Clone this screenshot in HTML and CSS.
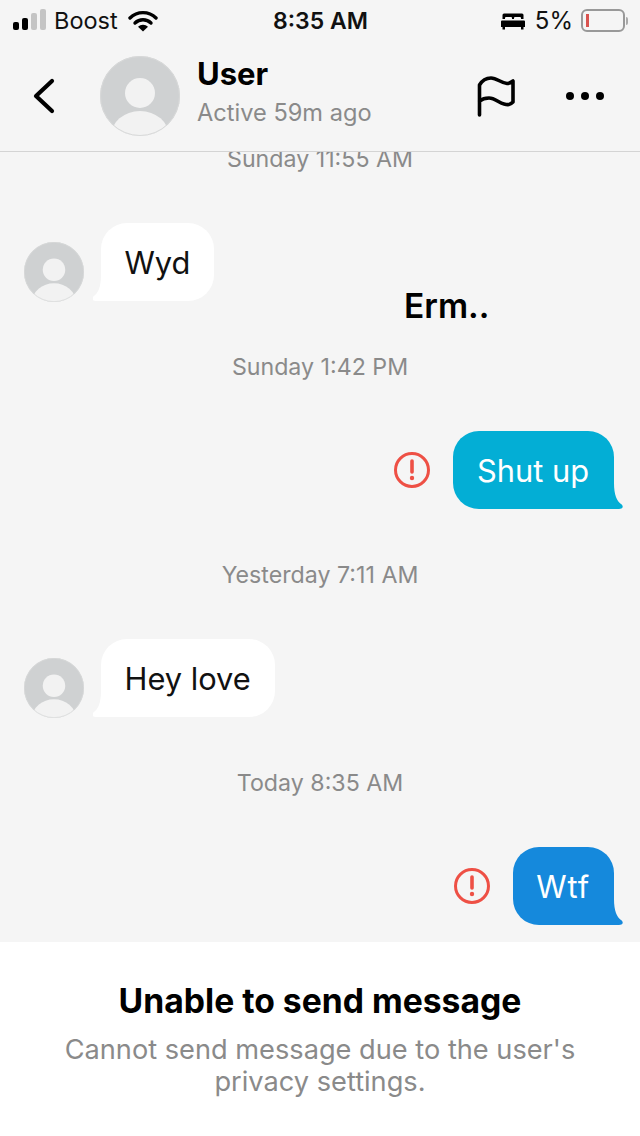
FILE: index.html
```html
<!DOCTYPE html>
<html lang="en">
<head>
    <meta charset="UTF-8">
    <meta name="viewport" content="width=device-width, initial-scale=1.0">
    <title>Messages</title>
    <link rel="stylesheet" href="styles.css">
</head>
<body>
    <svg class="defs" width="0" height="0">
        <symbol id="avatar" viewBox="0 0 80 80">
            <clipPath id="avatar-clip"><circle cx="40" cy="40" r="40"/></clipPath>
            <g clip-path="url(#avatar-clip)">
                <rect width="80" height="80" fill="#cfd1d2"/>
                <circle cx="40" cy="37" r="15" fill="#f2f2f2"/>
                <ellipse cx="40" cy="80" rx="29" ry="25" fill="#f2f2f2"/>
            </g>
            <circle cx="40" cy="40" r="39.500" fill="none" stroke="#d8d9d9"/>
        </symbol>
        <symbol id="alert" viewBox="0 0 36 36">
            <circle cx="18" cy="18" r="16.500" fill="none" stroke="#ee5045" stroke-width="3"/>
            <path d="M18 9v11" stroke="#ee5045" stroke-width="3.600" stroke-linecap="round"/>
            <circle cx="18" cy="26" r="2.200" fill="#ee5045"/>
        </symbol>
    </svg>

    <div class="screen">
        <!-- Status bar -->
        <div class="status">
            <div class="status-left">
                <svg class="signal" width="33" height="22" viewBox="0 0 33 22">
                    <rect x="0" y="13" width="6" height="8" rx="2" fill="#000"/>
                    <rect x="9" y="9" width="6" height="12" rx="2" fill="#000"/>
                    <rect x="18" y="4" width="6" height="17" rx="2" fill="#c4c4c4"/>
                    <rect x="27" y="0" width="6" height="21" rx="2" fill="#c4c4c4"/>
                </svg>
                <span>Boost</span>
                <svg class="wifi" width="30" height="22" viewBox="0 0 30 22">
                    <path d="M2 8a18.500 18.500 0 0 1 26 0" fill="none" stroke="#000" stroke-width="3.400" stroke-linecap="round"/>
                    <path d="M7 13a11.500 11.500 0 0 1 16 0" fill="none" stroke="#000" stroke-width="3.400" stroke-linecap="round"/>
                    <path d="M15 21.500l-5-4.800a7.200 7.200 0 0 1 10 0z" fill="#000"/>
                </svg>
            </div>
            <div class="status-time">8:35 AM</div>
            <div class="status-right">
                <svg width="24" height="18" viewBox="0 0 24 18">
                    <path d="M3 1.500h18a1.500 1.500 0 0 1 1.500 1.500v4H20V6a1 1 0 0 0-1-1h-5a1 1 0 0 0-1 1v1h-2V6a1 1 0 0 0-1-1H5a1 1 0 0 0-1 1v1H1.500V3A1.500 1.500 0 0 1 3 1.500z" fill="#000"/>
                    <path d="M1 8.500h22a1 1 0 0 1 1 1V15h-1.500v2.500H20V15H4v2.500H1.500V15H0V9.500a1 1 0 0 1 1-1z" fill="#000"/>
                </svg>
                <span class="battery-text">5%</span>
                <div class="battery"><div class="battery-level"></div></div>
                <div class="battery-cap"></div>
            </div>
        </div>

        <!-- Conversation header -->
        <div class="header">
            <svg class="back" width="22" height="36" viewBox="0 0 22 36">
                <path d="M19 3L3 18l16 15" fill="none" stroke="#000" stroke-width="4.200" stroke-linecap="round" stroke-linejoin="round"/>
            </svg>
            <svg class="avatar-large" width="80" height="80"><use href="#avatar"/></svg>
            <div class="header-text">
                <div class="header-name">User</div>
                <div class="header-active">Active 59m ago</div>
            </div>
            <svg class="flag" width="40" height="42" viewBox="0 0 40 42">
                <path d="M2.500 40V10C6 4 10 3 14 3C20 3 24 8 30 8.500C32 8.500 34 7.500 36 6V27C33 30 31 30 27 29C22 28 18 23 12 23C8 23 5 24 2.500 26" fill="none" stroke="#000" stroke-width="3.600" stroke-linecap="round" stroke-linejoin="round"/>
            </svg>
            <div class="dots"><span></span><span></span><span></span></div>
        </div>

        <!-- Messages -->
        <div class="thread">
            <div class="stamp stamp-first">Sunday 11:55 AM</div>
            <div class="row">
                <svg class="avatar" width="60" height="60"><use href="#avatar"/></svg>
                <div class="bubble in">Wyd</div>
            </div>
            <div class="note">Erm..</div>
            <div class="stamp">Sunday 1:42 PM</div>
            <div class="row row-out">
                <svg class="alert" width="36" height="36"><use href="#alert"/></svg>
                <div class="bubble out teal">Shut up</div>
            </div>
            <div class="stamp">Yesterday 7:11 AM</div>
            <div class="row">
                <svg class="avatar" width="60" height="60"><use href="#avatar"/></svg>
                <div class="bubble in">Hey love</div>
            </div>
            <div class="stamp">Today 8:35 AM</div>
            <div class="row row-out">
                <svg class="alert" width="36" height="36"><use href="#alert"/></svg>
                <div class="bubble out blue">Wtf</div>
            </div>
        </div>

        <!-- Blocked notice -->
        <div class="notice">
            <h1>Unable to send message</h1>
            <p>Cannot send message due to the user's privacy settings.</p>
        </div>
    </div>
</body>
</html>
```

FILE: styles.css
```css
body {
    font-family: Inter, "Liberation Sans", sans-serif;
    margin: 0;
    padding: 0;
    background-color: #f5f5f5;
    color: #000;
}
.defs {
    display: block;
    height: 0;
}
.screen {
    display: flex;
    flex-direction: column;
    height: 1136px;
    overflow: hidden;
}

/* Status bar */
.status {
    display: grid;
    grid-template-columns: 1fr auto 1fr;
    align-items: center;
    height: 40px;
    padding: 1px 12px 0 13px;
    box-sizing: border-box;
    font-size: 23px;
    color: #111;
    flex-shrink: 0;
}
.status-left {
    display: flex;
    align-items: center;
    gap: 8px;
    font-size: 23.500px;
}
.signal {
    margin-top: -1px;
}
.wifi {
    margin-left: 2px;
}
.status-time {
    font-weight: 600;
}
.status-right {
    display: flex;
    align-items: center;
    justify-content: flex-end;
}
.battery-text {
    margin: 0 8px 0 10px;
    font-size: 24px;
}
.battery {
    width: 44px;
    height: 23px;
    box-sizing: border-box;
    border: 2px solid #999;
    border-radius: 6px;
    padding: 3px;
}
.battery-level {
    width: 3px;
    height: 100%;
    background-color: #d9534f;
}
.battery-cap {
    width: 2px;
    height: 8px;
    margin-left: 1px;
    background-color: #aaa;
    border-radius: 0 2px 2px 0;
}

/* Header */
.header {
    display: flex;
    align-items: center;
    height: 112px;
    box-sizing: border-box;
    padding-left: 33px;
    padding-right: 36px;
    border-bottom: 1px solid #d4d4d4;
    flex-shrink: 0;
}
.back {
    flex-shrink: 0;
}
.avatar-large {
    margin-left: 45px;
    flex-shrink: 0;
}
.header-text {
    margin-left: 17px;
    margin-top: -4px;
    flex: 1;
}
.header-name {
    font-size: 31px;
    font-weight: 700;
    line-height: 38px;
}
.header-active {
    font-size: 23.600px;
    line-height: 40px;
    color: #8a8a8a;
}
.dots {
    display: flex;
    gap: 7px;
    margin-left: 49px;
}
.dots span {
    width: 8px;
    height: 8px;
    border-radius: 50%;
    background-color: #000;
}

/* Thread */
.thread {
    position: relative;
    flex: 1;
    overflow: hidden;
    min-height: 0;
}
.stamp {
    height: 30px;
    line-height: 32px;
    margin: 50px 0;
    text-align: center;
    font-size: 23.200px;
    color: #8a8a8a;
}
.stamp-first {
    margin-top: -9px;
}
.row {
    display: flex;
    align-items: flex-end;
    gap: 17px;
    padding: 0 26px 0 24px;
}
.row-out {
    justify-content: flex-end;
    align-items: center;
    gap: 23px;
}
.avatar {
    margin-bottom: -1px;
}
.bubble {
    position: relative;
    height: 78px;
    line-height: 80px;
    padding: 0 24px 0 23.500px;
    border-radius: 26px;
    font-size: 30.800px;
}
.bubble::after {
    content: "";
    position: absolute;
    bottom: 0;
    width: 36px;
    height: 26px;
    background-color: inherit;
    clip-path: path("M8 0C8 12 5 18 1 21C-2 23 -1 26 3 26L36 26L36 0Z");
}
.in {
    background-color: #fff;
    color: #111;
}
.in::after {
    left: -8px;
}
.out {
    color: #fff;
}
.out::after {
    right: -9px;
    transform: scaleX(-1);
    clip-path: path("M9 0C9 12 6 18 2 21C-1 23 0 26 4 26L36 26L36 0Z");
}
.teal {
    background-color: #03aed5;
    padding: 0 25px 0 24.500px;
}
.blue {
    background-color: #1589dc;
    letter-spacing: 0.900px;
}
.note {
    position: absolute;
    left: 404px;
    top: 134px;
    font-size: 33.500px;
    font-weight: 600;
    line-height: 40px;
}

/* Notice */
.notice {
    height: 194px;
    box-sizing: border-box;
    padding: 40px 40px 0;
    background-color: #fff;
    text-align: center;
    flex-shrink: 0;
}
.notice h1 {
    margin: 0;
    font-size: 33.700px;
    font-weight: 700;
    line-height: 38px;
}
.notice p {
    margin: 14px 0 0;
    font-size: 27.200px;
    line-height: 31.500px;
    color: #8a8a8a;
}
```
